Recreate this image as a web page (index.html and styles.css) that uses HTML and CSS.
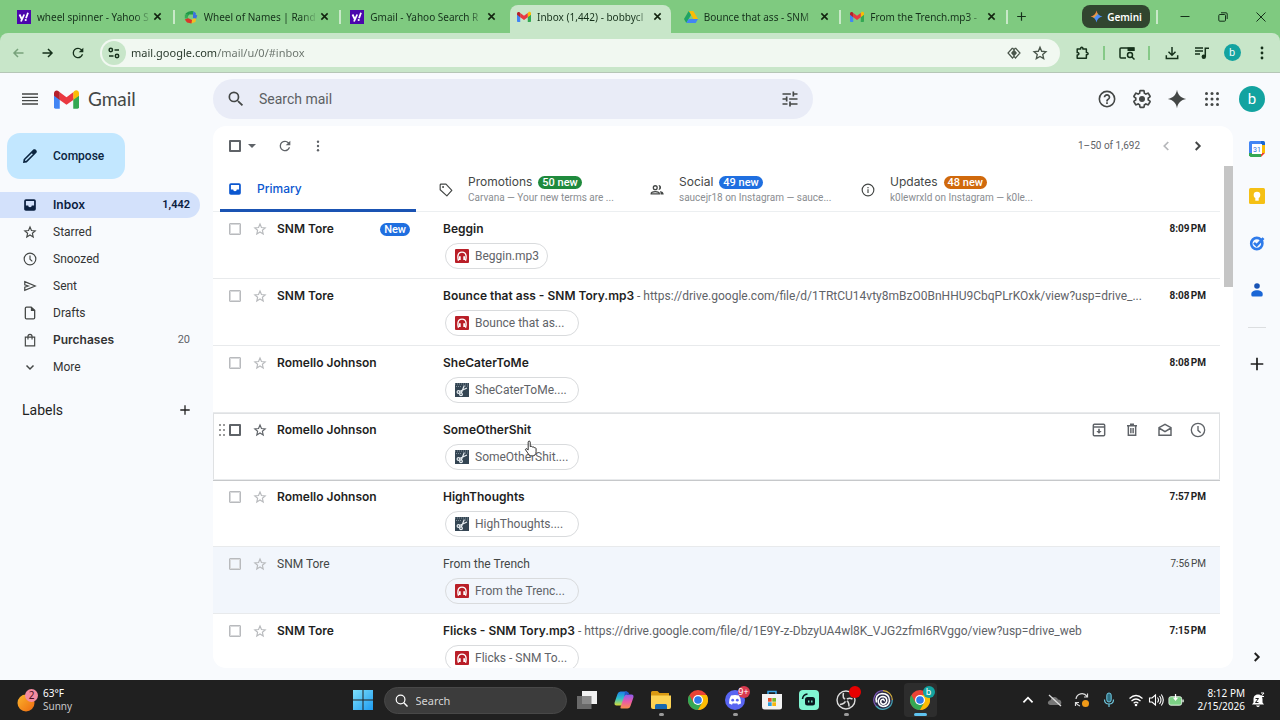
FILE: index.html
```html
<!DOCTYPE html>
<html lang="en">
<head>
<meta charset="utf-8">
<title>Inbox (1,442) - Gmail</title>
<link rel="stylesheet" href="styles.css">
</head>
<body>
<svg class="sprite" aria-hidden="true">
  <defs>
    <linearGradient id="winBlue" x1="0" y1="0" x2="1" y2="1"><stop offset="0" stop-color="#7fe0fb"/><stop offset="1" stop-color="#1d9bf0"/></linearGradient>
    <linearGradient id="sunFill" x1="0" y1="0" x2="1" y2="1"><stop offset="0" stop-color="#fbb52c"/><stop offset="1" stop-color="#ee6a10"/></linearGradient>
    <linearGradient id="copA" x1="0" y1="0" x2="0" y2="1"><stop offset="0" stop-color="#1c7ee8"/><stop offset=".5" stop-color="#2fc0c8"/><stop offset="1" stop-color="#d9dc35"/></linearGradient>
    <linearGradient id="copB" x1="0" y1="0" x2="0" y2="1"><stop offset="0" stop-color="#8a5cf0"/><stop offset=".5" stop-color="#e95aa9"/><stop offset="1" stop-color="#fb8f4a"/></linearGradient>
    <linearGradient id="gemFill" x1="0" y1="0" x2="1" y2="1"><stop offset=".25" stop-color="#ee5b45"/><stop offset=".4" stop-color="#e8a33c"/><stop offset=".5" stop-color="#4c8df6"/><stop offset=".8" stop-color="#4c8df6"/></linearGradient>
  </defs>
  <symbol id="x" viewBox="0 0 10 10"><path d="M1.500 1.500l7 7M8.500 1.500l-7 7" stroke="currentColor" stroke-width="1.700" fill="none"/></symbol>
  <symbol id="yahoo" viewBox="0 0 14 14"><rect width="14" height="14" fill="#4b06ad"/><path d="M2.500 4.500l2.200 4.500M7.200 4.500L4 11.500M9 8.200l2-5.400" stroke="#fff" stroke-width="1.800" fill="none"/><circle cx="8.700" cy="10" r="1.100" fill="#fff"/></symbol>
  <symbol id="wheel" viewBox="0 0 14 14"><path d="M1.500 3.500Q5 0 9.500 1.200L9 4.500H5L3.500 7z" fill="#1f9a48"/><path d="M9.500 1.200l2.500 2-.5 1.300 1.800 1L12 9l-3-1V4.500z" fill="#3a6fe0"/><path d="M12 8.500L11.500 12 7 13.500V10l3-1.500z" fill="#f1bd24"/><path d="M7.500 13.500L3 12.500.8 9.500l3-1.500L8 10z" fill="#d8372a"/><path d="M.8 8.500V4.500l3-.5v4.500z" fill="#37ad55"/></symbol>
  <symbol id="gmail" viewBox="0 0 26 19"><path d="M0 5v12.500Q0 19 1.600 19H6V8.500z" fill="#4285f4"/><path d="M20 8.500V19h4.400q1.600 0 1.600-1.500V5z" fill="#34a853"/><path d="M20 2v8l6-4.500V3c0-2.700-3-3.900-4.800-2.300z" fill="#fbbc04"/><path d="M6 10V2l7 5.200L20 2v8l-7 5z" fill="#ea3840"/><path d="M0 3v2.500L6 10V2L4.800.9C3-.8 0 .4 0 3z" fill="#b5202c"/></symbol>
  <symbol id="drive" viewBox="0 0 14 13"><path d="M4.700.5h4.600L14 8.500H9.500z" fill="#fbbc04"/><path d="M4.700.5L0 8.500l2.300 4L7 4.500z" fill="#1fa463"/><path d="M4.600 8.500H14l-2.300 4H2.300z" fill="#4285f4"/></symbol>
  <symbol id="spark" viewBox="0 0 24 24"><path d="M12 1c1.200 6.400 4.600 9.800 11 11-6.400 1.200-9.800 4.600-11 11-1.200-6.400-4.600-9.800-11-11 6.400-1.200 9.800-4.600 11-11z"/></symbol>
  <symbol id="plus" viewBox="0 0 14 14"><path d="M7 1.500v11M1.500 7h11" stroke="currentColor" stroke-width="1.500"/></symbol>
  <symbol id="min" viewBox="0 0 10 10"><path d="M.5 4.500h9" stroke="currentColor"/></symbol>
  <symbol id="restore" viewBox="0 0 10 10"><g fill="none" stroke="currentColor"><rect x=".8" y="2.500" width="6.700" height="6.700" rx="1"/><path d="M3 .8h5q1.200 0 1.200 1.200v5"/></g></symbol>
  <symbol id="close" viewBox="0 0 10 10"><path d="M.5.5l9 9M9.500.5l-9 9" stroke="currentColor"/></symbol>
  <symbol id="back" viewBox="0 0 14 14"><path d="M12.500 7H3M7 3L3 7l4 4" fill="none" stroke="currentColor" stroke-width="1.500"/></symbol>
  <symbol id="fwd" viewBox="0 0 14 14"><path d="M1.500 7H11M7 3l4 4-4 4" fill="none" stroke="currentColor" stroke-width="1.500"/></symbol>
  <symbol id="reload" viewBox="0 0 24 24"><path d="M17.650 6.350A7.960 7.960 0 0 0 12 4a8 8 0 1 0 7.730 10h-2.080A6 6 0 1 1 12 6c1.660 0 3.140.69 4.220 1.780L13 11h7V4z"/></symbol>
  <symbol id="siteinfo" viewBox="0 0 12 12"><g fill="none" stroke="currentColor" stroke-width="1.500"><circle cx="2.800" cy="3" r="1.700"/><path d="M6.500 3H11M1 9h4.500"/><circle cx="9" cy="9" r="1.700"/></g></symbol>
  <symbol id="lensid" viewBox="0 0 14 12"><g fill="none" stroke="currentColor" stroke-width="1.200"><path d="M5.500 1L1 6l4.500 5L7 9.300M8.500 1L13 6l-4.500 5L7 9.300M5.500 1L7 2.700 8.500 1"/></g><path d="M7 2.500L10 6 7 9.500 4 6z" fill="currentColor"/></symbol>
  <symbol id="star" viewBox="0 0 24 24"><path d="M12 3.500l2.500 5.900 6.400.6-4.800 4.200 1.400 6.300L12 17.200l-5.500 3.300 1.400-6.300L3.100 10l6.400-.6z" fill="none" stroke="currentColor" stroke-width="2"/></symbol>
  <symbol id="puzzle" viewBox="0 0 16 16"><path d="M2.500 3.500h4c-.5-2.600 3-2.600 2.500 0h4v4c2.600-.5 2.600 3 0 2.500v4H2.500v-3.800c2.600.3 2.600-3 0-2.700z" fill="none" stroke="currentColor" stroke-width="1.700" stroke-linejoin="round"/></symbol>
  <symbol id="taglens" viewBox="0 0 16 14"><g fill="none" stroke="currentColor" stroke-width="1.500"><path d="M15 5V2H2q-1 0-1 1v8q0 1 1 1h5"/><circle cx="11" cy="9" r="2.500"/><path d="M13 11l2.500 2.500"/></g><path d="M8.500 1.500H15V5H8.500z" fill="currentColor"/></symbol>
  <symbol id="download" viewBox="0 0 16 16"><path d="M8 1v9M4 6.500l4 4 4-4M1.500 10.500v3.800h13v-3.800" fill="none" stroke="currentColor" stroke-width="1.700"/></symbol>
  <symbol id="playlist" viewBox="0 0 16 14"><path d="M1 2h8M1 5h8M1 8h5M11.300 11V2.200h3.700" fill="none" stroke="currentColor" stroke-width="1.500"/><circle cx="9.800" cy="10.800" r="2.200" fill="currentColor"/></symbol>
  <symbol id="dots" viewBox="0 0 4 14"><g fill="currentColor"><circle cx="2" cy="2" r="1.400"/><circle cx="2" cy="7" r="1.400"/><circle cx="2" cy="12" r="1.400"/></g></symbol>
  <symbol id="menu" viewBox="0 0 16 12"><path d="M0 1h16M0 4.300h16M0 7.700h16M0 11h16" stroke="currentColor" stroke-width="1.300"/></symbol>
  <symbol id="search" viewBox="0 0 24 24"><path d="M15.500 14h-.79l-.28-.27A6.470 6.470 0 0 0 16 9.500 6.500 6.500 0 1 0 9.500 16c1.610 0 3.090-.59 4.230-1.570l.27.28v.79l5 4.990L20.490 19zm-6 0a4.500 4.500 0 1 1 0-9 4.500 4.500 0 0 1 0 9z"/></symbol>
  <symbol id="tune" viewBox="0 0 24 24"><path d="M3 17v2h6v-2H3zM3 5v2h10V5H3zm10 16v-2h8v-2h-8v-2h-2v6h2zM7 9v2H3v2h4v2h2V9H7zm14 4v-2H11v2h10zm-6-4h2V7h4V5h-4V3h-2v6z"/></symbol>
  <symbol id="help" viewBox="0 0 24 24"><circle cx="12" cy="12" r="9.200" fill="none" stroke="currentColor" stroke-width="1.900"/><path d="M11 18h2v-2h-2zM12 6c-2.210 0-4 1.790-4 4h2c0-1.100.9-2 2-2s2 .9 2 2c0 2-3 1.750-3 5h2c0-2.250 3-2.500 3-5 0-2.210-1.790-4-4-4z"/></symbol>
  <symbol id="gear" viewBox="0 0 24 24"><path d="M19.430 12.980c.04-.32.07-.64.07-.98s-.03-.66-.07-.98l2.110-1.650c.19-.15.24-.42.12-.64l-2-3.460c-.12-.22-.39-.3-.61-.22l-2.490 1c-.52-.4-1.080-.73-1.690-.98l-.38-2.650C14.460 2.180 14.250 2 14 2h-4c-.25 0-.46.18-.49.42l-.38 2.650c-.61.25-1.170.59-1.690.98l-2.490-1c-.23-.09-.49 0-.61.22l-2 3.460c-.13.22-.07.49.12.64l2.110 1.650c-.04.32-.07.65-.07.98s.03.66.07.98l-2.110 1.650c-.19.15-.24.42-.12.64l2 3.460c.12.22.39.3.61.22l2.490-1c.52.4 1.080.73 1.690.98l.38 2.650c.03.24.24.42.49.42h4c.25 0 .46-.18.49-.42l.38-2.650c.61-.25 1.170-.59 1.690-.98l2.490 1c.23.09.49 0 .61-.22l2-3.460c.12-.22.07-.49-.12-.64z" fill="none" stroke="currentColor" stroke-width="2"/><circle cx="12" cy="12" r="3.600"/></symbol>
  <symbol id="apps" viewBox="0 0 16 16"><g><circle cx="2.500" cy="2.500" r="1.500"/><circle cx="8" cy="2.500" r="1.500"/><circle cx="13.500" cy="2.500" r="1.500"/><circle cx="2.500" cy="8" r="1.500"/><circle cx="8" cy="8" r="1.500"/><circle cx="13.500" cy="8" r="1.500"/><circle cx="2.500" cy="13.500" r="1.500"/><circle cx="8" cy="13.500" r="1.500"/><circle cx="13.500" cy="13.500" r="1.500"/></g></symbol>
  <symbol id="pencil" viewBox="0 0 16 16"><path d="M1 15l.6-3.700L11.300 1.600c1.600-1.600 4.700 1.500 3.100 3.100L4.700 14.400z"/><path d="M3 13l.2-1.200 6.600-6.600 1 1-6.600 6.600z" fill="#c2e7ff"/></symbol>
  <symbol id="inbox" viewBox="0 0 24 24"><path d="M19 2H5a3 3 0 0 0-3 3v14c0 1.700 1.300 3 3 3h14a3 3 0 0 0 3-3V5a3 3 0 0 0-3-3zm0 11h-4c0 1.660-1.350 3-3 3s-3-1.340-3-3H5V5h14z"/></symbol>
  <symbol id="clock" viewBox="0 0 24 24"><g fill="none" stroke="currentColor" stroke-width="2"><circle cx="12" cy="12" r="10"/><path d="M12 6v6.500l4 3.500"/></g></symbol>
  <symbol id="send" viewBox="0 0 24 24"><path d="M3 4.500L21 12 3 19.500V14l6-2-6-2z" fill="none" stroke="currentColor" stroke-width="2"/></symbol>
  <symbol id="file" viewBox="0 0 24 24"><path d="M14 2H6Q4 2 4 4v16q0 2 2 2h12q2 0 2-2V7.500z" fill="none" stroke="currentColor" stroke-width="2.200"/><path d="M13.500 2v6.500H21z"/></symbol>
  <symbol id="bag" viewBox="0 0 24 24"><path d="M4 7h16v15H4zM8.500 11V6c0-5 7-5 7 0v5" fill="none" stroke="currentColor" stroke-width="2"/></symbol>
  <symbol id="down" viewBox="0 0 14 14"><path d="M3.500 5.500L7 9l3.500-3.500" fill="none" stroke="currentColor" stroke-width="1.500"/></symbol>
  <symbol id="up" viewBox="0 0 14 14"><path d="M3 9l4-4 4 4" fill="none" stroke="currentColor" stroke-width="1.500"/></symbol>
  <symbol id="left" viewBox="0 0 14 14"><path d="M9 3.500L5.500 7 9 10.500" fill="none" stroke="currentColor" stroke-width="1.500"/></symbol>
  <symbol id="right" viewBox="0 0 14 14"><path d="M5 3.500L8.500 7 5 10.500" fill="none" stroke="currentColor" stroke-width="1.700"/></symbol>
  <symbol id="tag" viewBox="0 0 24 24"><path d="M2 3.500Q2 2 3.500 2H12l10 10.500L13.500 22 2 11.500z" fill="none" stroke="currentColor" stroke-width="2" stroke-linejoin="round"/><circle cx="7" cy="7" r="1.700"/></symbol>
  <symbol id="people" viewBox="0 0 24 20"><g fill="none" stroke="currentColor" stroke-width="2.200"><circle cx="9" cy="6" r="3.300"/><path d="M2 16.500c0-5 14-5 14 0z"/></g><path d="M14.500 1.500c6 0 6 8.500 0 8.500 2-2.500 2-6 0-8.500zM17 11.500c4 .6 6.500 2.500 6.500 6H18c.2-2.500 0-4.500-1-6z"/></symbol>
  <symbol id="info" viewBox="0 0 24 24"><circle cx="12" cy="12" r="10" fill="none" stroke="currentColor" stroke-width="2"/><path d="M11 10.500h2V17h-2zM11 7h2v2h-2z"/></symbol>
  <symbol id="audio" viewBox="0 0 14 14"><rect width="14" height="14" rx="1" fill="#b91f28"/><path d="M4 11H3.300Q2.700 8.500 3 6.500a4.050 4.050 0 0 1 8 0q.3 2-.3 4.500H10" fill="none" stroke="#fff" stroke-width="1.400"/><path d="M4 7.300h1.700V11H4zM8.300 7.300H10V11H8.300z" fill="#fff"/></symbol>
  <symbol id="cut" viewBox="0 0 14 14"><rect width="14" height="14" fill="#344553"/><path d="M0 1h14M1 3.500h5M10 3h3" stroke="#81909a" stroke-width="1" stroke-dasharray="1 1"/><g fill="none" stroke="#e8eef2" stroke-width="1.200"><path d="M4.500 8.500L12 5M6.300 10l3-7.500"/><circle cx="3.500" cy="9" r="1.400"/><circle cx="6" cy="11.300" r="1.400"/></g></symbol>
  <symbol id="archive" viewBox="0 0 24 24"><g fill="none" stroke="currentColor" stroke-width="2.200"><rect x="3.500" y="3.500" width="17" height="17" rx="1.500"/><path d="M3 7.500h18"/></g><path d="M10.800 10h2.400v3.500H16l-4 4-4-4h2.800z"/></symbol>
  <symbol id="trash" viewBox="0 0 24 24"><g fill="none" stroke="currentColor" stroke-width="2.200"><path d="M6.500 6v14h11V6M4.500 5.500h15M9 3.500h6M10.300 9v8M13.700 9v8"/></g></symbol>
  <symbol id="mailopen" viewBox="0 0 24 24"><path d="M3 8.500L12 3.500l9 5V20H3zM3 9l9 5.500L21 9" fill="none" stroke="currentColor" stroke-width="2.200"/></symbol>
  <symbol id="handle" viewBox="0 0 8 12"><g fill="#9a9a9a"><rect x="1" y="0" width="2" height="2"/><rect x="5" y="0" width="2" height="2"/><rect x="1" y="5" width="2" height="2"/><rect x="5" y="5" width="2" height="2"/><rect x="1" y="10" width="2" height="2"/><rect x="5" y="10" width="2" height="2"/></g></symbol>
  <symbol id="keep" viewBox="0 0 16 16"><rect width="16" height="16" rx="1.500" fill="#f5c015"/><circle cx="8" cy="7" r="3.300" fill="#fff"/><path d="M6.300 9h3.400v3.700H6.300z" fill="#fff"/></symbol>
  <symbol id="tasks" viewBox="0 0 16 16"><circle cx="7.800" cy="8.500" r="5.600" fill="none" stroke="#2f7bea" stroke-width="2.600"/><path d="M5 7.800l2.700 2.700 6.800-7.300" fill="none" stroke="#2f7bea" stroke-width="2.600"/></symbol>
  <symbol id="contact" viewBox="0 0 16 16"><circle cx="8" cy="4" r="2.800" fill="#1853b5"/><path d="M2.300 13V12c0-5 11.400-5 11.400 0v1q0 1.500-1.500 1.500H3.800Q2.300 14.500 2.300 13z" fill="#1a66d6"/></symbol>
  <symbol id="chrome" viewBox="0 0 20 20"><circle cx="10" cy="10" r="10" fill="#ea4335"/><path d="M1.300 5A10 10 0 0 0 10 20l4.500-7.500-9 0z" fill="#34a853"/><path d="M18.700 5A10 10 0 0 1 10 20l4.300-7.500L10 5z" fill="#fbbc04"/><circle cx="10" cy="10" r="5" fill="#fff"/><circle cx="10" cy="10" r="3.800" fill="#2f79ea"/></symbol>
</svg>

<header class="browser">
  <div class="tabstrip">
    <nav class="tabs" aria-label="Browser tabs">
      <div class="tab"><svg class="fav"><use href="#yahoo"/></svg><span class="tab-title">wheel spinner - Yahoo S</span><button class="tab-x" aria-label="Close tab"><svg><use href="#x"/></svg></button></div>
      <div class="tab"><svg class="fav"><use href="#wheel"/></svg><span class="tab-title">Wheel of Names | Rand</span><button class="tab-x" aria-label="Close tab"><svg><use href="#x"/></svg></button></div>
      <div class="tab plain"><svg class="fav"><use href="#yahoo"/></svg><span class="tab-title">Gmail - Yahoo Search R</span><button class="tab-x" aria-label="Close tab"><svg><use href="#x"/></svg></button></div>
      <div class="tab active"><svg class="fav"><use href="#gmail"/></svg><span class="tab-title">Inbox (1,442) - bobbycl</span><button class="tab-x" aria-label="Close tab"><svg><use href="#x"/></svg></button></div>
      <div class="tab"><svg class="fav"><use href="#drive"/></svg><span class="tab-title">Bounce that ass - SNM</span><button class="tab-x" aria-label="Close tab"><svg><use href="#x"/></svg></button></div>
      <div class="tab"><svg class="fav"><use href="#gmail"/></svg><span class="tab-title">From the Trench.mp3 -</span><button class="tab-x" aria-label="Close tab"><svg><use href="#x"/></svg></button></div>
    </nav>
    <button class="newtab" aria-label="New tab"><svg><use href="#plus"/></svg></button>
    <button class="gemini"><svg><use href="#spark"/></svg>Gemini</button>
    <span class="strip-sep"></span>
    <div class="winctl">
      <button aria-label="Minimize"><svg><use href="#min"/></svg></button>
      <button aria-label="Restore"><svg><use href="#restore"/></svg></button>
      <button aria-label="Close"><svg><use href="#close"/></svg></button>
    </div>
  </div>
  <div class="toolbar">
    <div class="navbtns">
      <button class="dim" aria-label="Back"><svg><use href="#back"/></svg></button>
      <button aria-label="Forward"><svg><use href="#fwd"/></svg></button>
      <button aria-label="Reload"><svg class="big"><use href="#reload"/></svg></button>
    </div>
    <div class="omnibox">
      <button class="site" aria-label="Site information"><svg><use href="#siteinfo"/></svg></button>
      <input class="url" type="text" aria-label="Address" value="mail.google.com/mail/u/0/#inbox">
      <button class="omni-btn" aria-label="Autofill"><svg><use href="#lensid"/></svg></button>
      <button class="omni-btn" aria-label="Bookmark"><svg class="big"><use href="#star"/></svg></button>
    </div>
    <div class="exts">
      <button aria-label="Extensions"><svg><use href="#puzzle"/></svg></button><span class="ext-sep"></span>
      <button aria-label="Search with Lens"><svg><use href="#taglens"/></svg></button><span class="ext-sep"></span>
      <button aria-label="Downloads"><svg><use href="#download"/></svg></button>
      <button aria-label="Media"><svg><use href="#playlist"/></svg></button>
      <button aria-label="Profile"><span class="mini-avatar">b</span></button>
      <button aria-label="Menu"><svg><use href="#dots"/></svg></button>
    </div>
  </div>
</header>

<div class="app">
  <header class="gm-head">
    <div class="brand">
      <button aria-label="Main menu"><svg class="burger"><use href="#menu"/></svg></button>
      <a class="logo" href="#"><svg><use href="#gmail"/></svg><span>Gmail</span></a>
    </div>
    <form class="searchbar">
      <button type="button" aria-label="Search"><svg><use href="#search"/></svg></button>
      <input type="text" placeholder="Search mail" aria-label="Search mail">
      <button type="button" aria-label="Search options"><svg><use href="#tune"/></svg></button>
    </form>
    <div class="head-actions">
      <button aria-label="Support"><svg><use href="#help"/></svg></button>
      <button aria-label="Settings"><svg><use href="#gear"/></svg></button>
      <button aria-label="Ask Gemini"><svg><use href="#spark"/></svg></button>
      <button aria-label="Google apps"><svg class="small"><use href="#apps"/></svg></button>
      <button class="avatar" aria-label="Account">b</button>
    </div>
  </header>

  <div class="gm-body">
    <aside class="sidebar">
      <button class="compose"><svg><use href="#pencil"/></svg>Compose</button>
      <nav class="folders">
        <a class="folder current" href="#"><svg><use href="#inbox"/></svg><span>Inbox</span><b>1,442</b></a>
        <a class="folder" href="#"><svg><use href="#star"/></svg><span>Starred</span></a>
        <a class="folder" href="#"><svg><use href="#clock"/></svg><span>Snoozed</span></a>
        <a class="folder" href="#"><svg><use href="#send"/></svg><span>Sent</span></a>
        <a class="folder" href="#"><svg><use href="#file"/></svg><span>Drafts</span></a>
        <a class="folder strong" href="#"><svg><use href="#bag"/></svg><span>Purchases</span><i>20</i></a>
        <a class="folder" href="#"><svg><use href="#down"/></svg><span>More</span></a>
      </nav>
      <div class="labels"><h2>Labels</h2><button aria-label="Create new label"><svg><use href="#plus"/></svg></button></div>
    </aside>

    <main class="panel">
      <div class="listbar">
        <input class="check dark" type="checkbox" aria-label="Select all">
        <button class="caret" aria-label="Select menu"></button>
        <button class="bar-btn" aria-label="Refresh"><svg><use href="#reload"/></svg></button>
        <button class="bar-btn" aria-label="More options"><svg class="tiny"><use href="#dots"/></svg></button>
        <span class="count">1–50 of 1,692</span>
        <button class="page-btn faded" aria-label="Newer"><svg><use href="#left"/></svg></button>
        <button class="page-btn" aria-label="Older"><svg><use href="#right"/></svg></button>
      </div>
      <div class="scroll">
        <div class="content">
          <nav class="cats">
            <a class="cat on" href="#"><svg><use href="#inbox"/></svg><span class="cat-name">Primary</span></a>
            <a class="cat" href="#"><svg><use href="#tag"/></svg><span class="cat-text"><span class="cat-name">Promotions <em class="pill green">50 new</em></span><small>Carvana — Your new terms are ...</small></span></a>
            <a class="cat" href="#"><svg><use href="#people"/></svg><span class="cat-text"><span class="cat-name">Social <em class="pill blue">49 new</em></span><small>saucejr18 on Instagram — sauce...</small></span></a>
            <a class="cat" href="#"><svg><use href="#info"/></svg><span class="cat-text"><span class="cat-name">Updates <em class="pill orange">48 new</em></span><small>k0lewrxld on Instagram — k0le...</small></span></a>
          </nav>
          <ul class="mails">
            <li class="mail"><span class="grip"></span><input class="check" type="checkbox" aria-label="Select Beggin"><button class="fave" aria-label="Star"><svg><use href="#star"/></svg></button><span class="from">SNM Tore<em class="pill blue">New</em></span><div class="what"><p><b>Beggin</b></p><a class="chip short" href="#"><svg><use href="#audio"/></svg>Beggin.mp3</a></div><time>8:09&#8239;PM</time></li>
            <li class="mail"><span class="grip"></span><input class="check" type="checkbox" aria-label="Select Bounce"><button class="fave" aria-label="Star"><svg><use href="#star"/></svg></button><span class="from">SNM Tore</span><div class="what"><p><b>Bounce that ass - SNM Tory.mp3</b> - https://drive.google.com/file/d/1TRtCU14vty8mBzO0BnHHU9CbqPLrKOxk/view?usp=drive_...</p><a class="chip" href="#"><svg><use href="#audio"/></svg>Bounce that as...</a></div><time>8:08&#8239;PM</time></li>
            <li class="mail"><span class="grip"></span><input class="check" type="checkbox" aria-label="Select SheCaterToMe"><button class="fave" aria-label="Star"><svg><use href="#star"/></svg></button><span class="from">Romello Johnson</span><div class="what"><p><b>SheCaterToMe</b></p><a class="chip" href="#"><svg><use href="#cut"/></svg>SheCaterToMe....</a></div><time>8:08&#8239;PM</time></li>
            <li class="mail hover"><span class="grip"><svg><use href="#handle"/></svg></span><input class="check dark" type="checkbox" aria-label="Select SomeOtherShit"><button class="fave" aria-label="Star"><svg><use href="#star"/></svg></button><span class="from">Romello Johnson</span><div class="what"><p><b>SomeOtherShit</b></p><a class="chip" href="#"><svg><use href="#cut"/></svg>SomeOtherShit....</a>
              <svg class="pointer" viewBox="0 0 14 18"><path d="M4.500 10.500V2.200c0-1.600 2.200-1.600 2.200 0V7c1-.7 2-.4 2.200.5 1-.5 1.900-.2 2.100.7 1-.4 2 .1 2 1.300v3c0 3-1.500 4.500-4.300 4.500-2.700 0-3.700-1.300-4.700-3.300L1.700 10.500c-.5-1.300 1-1.800 1.700-.8z" fill="#fff" stroke="#222"/></svg></div>
              <div class="acts"><button aria-label="Archive"><svg><use href="#archive"/></svg></button><button aria-label="Delete"><svg><use href="#trash"/></svg></button><button aria-label="Mark as read"><svg><use href="#mailopen"/></svg></button><button aria-label="Snooze"><svg><use href="#clock"/></svg></button></div></li>
            <li class="mail"><span class="grip"></span><input class="check" type="checkbox" aria-label="Select HighThoughts"><button class="fave" aria-label="Star"><svg><use href="#star"/></svg></button><span class="from">Romello Johnson</span><div class="what"><p><b>HighThoughts</b></p><a class="chip" href="#"><svg><use href="#cut"/></svg>HighThoughts....</a></div><time>7:57&#8239;PM</time></li>
            <li class="mail read"><span class="grip"></span><input class="check" type="checkbox" aria-label="Select From the Trench"><button class="fave" aria-label="Star"><svg><use href="#star"/></svg></button><span class="from">SNM Tore</span><div class="what"><p><b>From the Trench</b></p><a class="chip" href="#"><svg><use href="#audio"/></svg>From the Trenc...</a></div><time>7:56&#8239;PM</time></li>
            <li class="mail"><span class="grip"></span><input class="check" type="checkbox" aria-label="Select Flicks"><button class="fave" aria-label="Star"><svg><use href="#star"/></svg></button><span class="from">SNM Tore</span><div class="what"><p><b>Flicks - SNM Tory.mp3</b> - https://drive.google.com/file/d/1E9Y-z-DbzyUA4wl8K_VJG2zfmI6RVggo/view?usp=drive_web</p><a class="chip" href="#"><svg><use href="#audio"/></svg>Flicks - SNM To...</a></div><time>7:15&#8239;PM</time></li>
          </ul>
        </div>
        <div class="track"><div class="thumb"></div></div>
      </div>
    </main>

    <aside class="rail">
      <button aria-label="Calendar"><svg viewBox="0 0 16 16"><path d="M0 1.500Q0 0 1.500 0H12v4H4v8H0z" fill="#4285f4"/><path d="M12 0h2.500Q16 0 16 1.500V4h-4z" fill="#1967d2"/><path d="M12 4h4v8h-4z" fill="#fbbc04"/><path d="M4 12h8v4H1.500L0 14.500V12z" fill="#34a853"/><path d="M12 12h4l-4 4z" fill="#ea4335"/><path d="M3 3h10v10H3z" fill="#fff"/><text x="8" y="10.500" font-size="7" text-anchor="middle" fill="#2f6fdc">31</text></svg></button>
      <button aria-label="Keep"><svg><use href="#keep"/></svg></button>
      <button aria-label="Tasks"><svg><use href="#tasks"/></svg></button>
      <button aria-label="Contacts"><svg><use href="#contact"/></svg></button>
      <hr>
      <button class="add" aria-label="Get add-ons"><svg><use href="#plus"/></svg></button>
      <button class="collapse" aria-label="Hide side panel"><svg><use href="#right"/></svg></button>
    </aside>
  </div>
</div>

<footer class="taskbar">
  <button class="weather"><svg viewBox="0 0 22 24"><circle cx="9" cy="15" r="8.500" fill="url(#sunFill)"/><circle cx="14.500" cy="7.500" r="6.500" fill="#f58ba0"/><text x="14.500" y="11" font-size="10" text-anchor="middle" fill="#4a1020">2</text></svg><span>63°F<br><i>Sunny</i></span></button>
  <div class="dock">
    <button class="app-btn start" aria-label="Start"><svg viewBox="0 0 20 20"><path d="M0 0h9.500v9.500H0zM10.500 0H20v9.500h-9.500zM0 10.500h9.500V20H0zM10.500 10.500H20V20h-9.500z"/></svg></button>
    <label class="tb-search"><svg viewBox="0 0 14 14"><circle cx="6" cy="6" r="4.700" fill="none" stroke="#fff" stroke-width="1.300"/><path d="M9.500 9.500l4 4" stroke="#fff" stroke-width="1.500"/></svg><input type="text" placeholder="Search" aria-label="Search Windows"></label>
    <button class="app-btn" aria-label="Task view"><svg viewBox="0 0 20 20"><rect x="5" y="1" width="15" height="13" fill="#f1f1f1"/><rect x="0" y="6" width="14.500" height="13" fill="#777" opacity=".85"/></svg></button>
    <button class="app-btn" aria-label="Copilot"><svg viewBox="0 0 20 20"><path d="M6.500 1.500h6q1.500 0 1 1.500L10 13q-.7 2.500-3 2.500H2.500Q0 15.500.6 12.500L3.500 4q.8-2.500 3-2.500z" fill="url(#copA)"/><path d="M13 4.500h4.500q2.500 0 1.900 3l-2.900 8.500q-.8 2.500-3 2.500h-6q-1.500 0-1-1.500L10 7q.7-2.500 3-2.500z" fill="url(#copB)"/><path d="M11 1.500h1.500q2 0 3 3H13q-2 0-2.700 2z" fill="#2457c9"/></svg></button>
    <button class="app-btn open" aria-label="File Explorer"><svg viewBox="0 0 20 20"><path d="M0 2.500Q0 1 1.500 1h5l2 2H18v4H0z" fill="#d99a13"/><path d="M0 5.500h20V17q0 2-2 2H2q-2 0-2-2z" fill="#fcd354"/><path d="M4 19v-3.500Q4 14 5.500 14h9q1.500 0 1.500 1.500V19z" fill="#1769b0"/></svg></button>
    <button class="app-btn" aria-label="Chrome"><svg><use href="#chrome"/></svg></button>
    <button class="app-btn open" aria-label="Discord"><svg viewBox="0 0 20 20"><circle cx="10" cy="10" r="10" fill="#5865f2"/><path d="M6 5.500q4-1 8 0 2.300 3.500 2 8l-3 1.300-.8-1.500q-2.200.5-4.400 0L7 14.800l-3-1.300q-.3-4.500 2-8z" fill="#fff"/><circle cx="7.700" cy="10.200" r="1.400" fill="#5865f2"/><circle cx="12.300" cy="10.200" r="1.400" fill="#5865f2"/></svg><span class="badge red">9+</span></button>
    <button class="app-btn" aria-label="Store"><svg viewBox="0 0 20 20"><path d="M6 4V1.500h8V4" fill="none" stroke="#39a7e8" stroke-width="1.500"/><path d="M0 4h20v13q0 2.500-2.500 2.500h-15Q0 19.500 0 17z" fill="#f3f3f3"/><path d="M6 8h3.700v3.700H6z" fill="#e8502a"/><path d="M10.300 8H14v3.700h-3.700z" fill="#76b82a"/><path d="M6 12.300h3.700V16H6z" fill="#2a9fe0"/><path d="M10.300 12.300H14V16h-3.700z" fill="#f8b711"/></svg></button>
    <button class="app-btn" aria-label="Streamlabs"><svg viewBox="0 0 20 20"><rect width="20" height="20" rx="4" fill="#80f5d2"/><rect x="6" y="7" width="10" height="8.500" rx="2.500" fill="#09161d"/><path d="M3.500 9q.5-4.500 5-5" fill="none" stroke="#09161d" stroke-width="1.600"/><path d="M9.700 10.500v2M12.800 10.500v2" stroke="#80f5d2" stroke-width="1.300"/></svg></button>
    <button class="app-btn open" aria-label="OBS Studio"><svg viewBox="0 0 20 20"><circle cx="10" cy="10" r="9" fill="#262626" stroke="#ddd" stroke-width="1.400"/><g fill="none" stroke="#ddd" stroke-width="1.500"><path d="M7.500 3q-1.500 5 2.500 7 2.500-3 6.500-1M10 10q-1 4-6 4.500M10 10q3 1.500 3 6.500"/></g><circle cx="10" cy="10" r="1.600" fill="#262626"/></svg><span class="badge rec"></span></button>
    <button class="app-btn" aria-label="Connect"><svg viewBox="0 0 20 20"><circle cx="10" cy="10" r="9.300" fill="#2a2a45"/><path d="M10 .7A9.300 9.300 0 0 1 19.300 10" fill="none" stroke="#d8b23b" stroke-width="1.200"/><path d="M19.300 10A9.300 9.300 0 0 1 3 16" fill="none" stroke="#45a6b8" stroke-width="1.200"/><path d="M3 16A9.300 9.300 0 0 1 10 .7" fill="none" stroke="#7c56b8" stroke-width="1.200"/><path d="M3.500 12.500Q1.500 4.500 9 3.500q7.500 0 7.500 7.500-1 5.500-6.500 5.500-5-1-4.800-6Q6.500 6.500 10 6.500q4 .5 3.800 4.500-.8 3.500-4 3.200-2.600-1-2-3.500Q8.700 9 10.500 9.300q1.200 1 .5 2" fill="none" stroke="#fff" stroke-width="1.500"/></svg></button>
    <button class="app-btn focus" aria-label="Chrome, active"><svg><use href="#chrome"/></svg><span class="badge teal">b</span></button>
  </div>
  <div class="tray">
    <button aria-label="Hidden icons"><svg><use href="#up"/></svg></button>
    <button aria-label="OneDrive"><svg viewBox="0 0 16 16"><path d="M3.500 13C0 13 0 8.500 3.500 8.200 4.500 4 10 4 11 7.500c4 0 4.500 5.500 1 5.500z" fill="#777"/><path d="M2 3l12 11" stroke="#ddd" stroke-width="1.300"/></svg></button>
    <button aria-label="Updates"><svg viewBox="0 0 16 16"><path d="M2 7a6 6 0 0 1 11-2.500M13.500 1.500v3.500H10M6 14Q3 13 2 10.500M1.500 14v-3.500H5" fill="none" stroke="#ddd" stroke-width="1.200"/><circle cx="11.500" cy="11.500" r="3.500" fill="#f09a18"/></svg></button>
    <button aria-label="Microphone"><svg viewBox="0 0 16 16"><rect x="5.800" y="1" width="4.400" height="9" rx="2.200" fill="#2d6f82" stroke="#6fc7de"/><path d="M3.500 7.500c0 6 9 6 9 0M8 12v3" fill="none" stroke="#6fc7de" stroke-width="1.200"/></svg></button>
    <button class="status" aria-label="Network, volume, battery">
      <svg viewBox="0 0 16 16"><g fill="none" stroke="#fff" stroke-width="1.200"><path d="M1.500 6.500q6.500-6 13 0M3.500 9q4.500-4 9 0M5.700 11.200q2.300-2 4.600 0"/></g><circle cx="8" cy="13" r="1.300" fill="#fff"/></svg>
      <svg viewBox="0 0 16 16"><path d="M1.500 6h2.500l3.500-3v10L4 10H1.500zM9.500 5.500q2 2.500 0 5M11.500 4q3 4 0 8M13.300 2.500q4 5.500 0 11" fill="none" stroke="#fff" stroke-width="1.100"/></svg>
      <svg viewBox="0 0 17 15"><rect x="1" y="4" width="13.500" height="9" rx="2" fill="#7bd084" stroke="#e5f5e6"/><path d="M16 7v3" stroke="#e5f5e6" stroke-width="1.500"/><path d="M8 1v6M6 5l2 2.500L10 5" fill="none" stroke="#fff" stroke-width="1.300"/></svg>
    </button>
    <button class="datetime"><time>8:12 PM<br>2/15/2026</time></button>
    <button class="bell" aria-label="Notifications"><svg viewBox="0 0 14 16"><path d="M7 2.500c3.500 0 4.500 2.500 4.500 5v3l1.500 2H1l1.500-2v-3c0-2.500 1-5 4.500-5zM5 13.500h4q-2 3-4 0z" fill="#fff"/><path d="M4.500 6.500h3l-3 4h3" fill="none" stroke="#222" stroke-width="1"/><path d="M10 1h3l-3 3.500h3" fill="none" stroke="#fff"/></svg></button>
  </div>
</footer>
</body>
</html>
```

FILE: styles.css
```css
* { box-sizing: border-box; }
body {
  margin: 0;
  height: 100vh;
  display: flex;
  flex-direction: column;
  overflow: hidden;
  font: 12px/18px Roboto, "Liberation Sans", sans-serif;
  color: #1f1f1f;
  background: #f8fafd;
}
.sprite { position: absolute; width: 0; height: 0; }
svg { display: block; flex: none; fill: currentColor; width: 16px; height: 16px; }
button { border: 0; padding: 0; background: none; color: inherit; font: inherit; display: flex; align-items: center; justify-content: center; flex: none; }
input { font: inherit; color: inherit; border: 0; background: none; padding: 0; outline: 0; min-width: 0; }
a { color: inherit; text-decoration: none; }
i, em { font-style: normal; }

/* Browser frame */
.browser { background: #7fca80; font-family: "Noto Sans", "Open Sans", sans-serif; font-size: 11px; color: #15301a; }
.tabstrip { display: flex; align-items: center; height: 33px; padding-left: 10px; }
.tabs { display: flex; flex: 0 1 1000px; min-width: 0; align-self: stretch; }
.tab { flex: 1 1 0; min-width: 0; display: flex; align-items: center; margin-top: 5px; padding: 0 2px 5px 7px; position: relative; }
.tab::after { content: ""; width: 2px; height: 14px; margin-left: 7px; background: #c8e9c8; }
.fav { width: 14px; height: 14px; margin-right: 6px; }
.tab-title { flex: 1; min-width: 0; overflow: hidden; white-space: nowrap; font-size: 10px; -webkit-mask-image: linear-gradient(90deg, #000 85%, transparent); mask-image: linear-gradient(90deg, #000 85%, transparent); }
.tab-x { width: 10px; height: 16px; margin: 0 3px 0 1px; color: #12240f; }
.tab-x svg { width: 9px; height: 9px; }
.plain::after, .active::after { background: transparent; }
.active::before { content: ""; position: absolute; left: 0; right: 6px; top: 0; bottom: 0; background: #c8e6c9; border-radius: 8px 8px 0 0; }
.active > * { position: relative; }
.newtab { width: 22px; height: 28px; }
.newtab svg { width: 11px; height: 11px; }
.gemini { margin-left: auto; width: 68px; height: 23px; border-radius: 8px; background: #31452f; color: #fff; font-weight: 600; font-size: 10px; gap: 4px; }
.gemini svg { width: 13px; height: 13px; fill: url(#gemFill); }
.strip-sep { width: 2px; height: 14px; background: #c8e9c8; margin: 0 8px 0 6px; }
.winctl { display: flex; }
.winctl button { width: 38px; height: 28px; }
.winctl svg { width: 10px; height: 10px; }
.toolbar { display: flex; align-items: center; height: 40px; padding: 0 3px; background: #c8e6c9; border-bottom: 1px solid #b5c6b6; border-radius: 8px 8px 0 0; }
.navbtns { display: flex; width: 97px; }
.navbtns button { width: 30px; height: 30px; }
.navbtns svg { width: 14px; height: 14px; }
.navbtns .big { width: 16px; height: 16px; }
.dim { color: #78a27b; }
.omnibox { flex: 1; display: flex; align-items: center; height: 28px; padding: 0 7px 0 2px; border-radius: 14px; background: #f1f8f1; }
.site { width: 24px; height: 24px; border-radius: 50%; background: #c8e6c9; }
.site svg { width: 12px; height: 12px; }
.url { flex: 1; margin-left: 5px; color: transparent; background: linear-gradient(90deg, #233326 86px, #667068 86px); -webkit-background-clip: text; background-clip: text; }
.omni-btn { width: 26px; height: 26px; color: #4a564b; }
.omni-btn svg { width: 14px; height: 12px; }
.omni-btn .big { width: 16px; height: 16px; }
.exts { display: flex; align-items: center; width: 217px; padding-left: 7px; }
.exts button { width: 30px; height: 30px; }
.exts svg { width: 16px; height: 14px; }
.ext-sep { width: 2px; height: 14px; margin: 0 7px 0 6px; background: #85c987; }
.mini-avatar { width: 17px; height: 17px; border-radius: 50%; background: #13a3a0; color: #fff; font-size: 10px; line-height: 17px; }

/* Gmail header */
.app { flex: 1; min-height: 0; display: flex; flex-direction: column; padding-bottom: 12px; }
.gm-head { display: flex; align-items: center; height: 53px; padding-bottom: 1px; color: #444746; }
.brand { width: 213px; display: flex; align-items: center; padding-left: 22px; gap: 16px; }
.burger { width: 16px; height: 12px; }
.logo { display: flex; align-items: center; gap: 9px; font: 19px/24px Lato, sans-serif; }
.logo svg { width: 25px; height: 19px; }
.searchbar { flex: 0 1 600px; display: flex; align-items: center; height: 40px; padding: 0 13px; border-radius: 20px; background: #e9ecf7; gap: 13px; }
.searchbar svg { width: 20px; height: 20px; }
.searchbar input { flex: 1; font-size: 14px; }
.searchbar input::placeholder { color: #5c5f63; opacity: 1; }
.head-actions { display: flex; align-items: center; margin-left: auto; padding-right: 15px; gap: 15px; }
.head-actions svg { width: 20px; height: 20px; }
.head-actions .small { width: 16px; height: 16px; margin: 0 2px; }
.avatar { width: 26px; height: 26px; margin-left: 2px; border-radius: 50%; background: #13a3a0; color: #fff; font-size: 15px; }

/* Sidebar */
.gm-body { flex: 1; min-height: 0; display: flex; }
.sidebar { width: 213px; flex: none; }
.compose { margin: 7px 0 13px 7px; width: 118px; height: 46px; padding-left: 15px; justify-content: flex-start; border-radius: 13px; background: #c2e7ff; color: #0b2540; font-weight: 500; gap: 15px; }
.folder { display: flex; align-items: center; gap: 16px; height: 26px; margin: 0 13px 1px 0; padding: 0 10px 0 23px; color: #333; }
.folder svg { width: 14px; height: 14px; color: #444746; }
.folder span { flex: 1; }
.folder b, .folder i { font: 600 11px/18px Roboto, sans-serif; }
.folder i { font-weight: 400; color: #5f6368; }
.current { background: #d3e1fb; border-radius: 0 13px 13px 0; color: #0b2040; }
.current svg { color: #0b2040; }
.current, .strong { font-family: Inter, sans-serif; font-weight: 600; }
.labels { display: flex; align-items: center; justify-content: space-between; margin-top: 18px; padding: 0 22px; height: 24px; }
.labels h2 { margin: 0; font-size: 14px; font-weight: 400; }
.labels svg { width: 12px; height: 12px; }

/* Message list */
.panel { flex: 1; min-width: 0; display: flex; flex-direction: column; background: #fff; border-radius: 13px; overflow: hidden; }
.listbar { display: flex; align-items: center; height: 40px; flex: none; padding: 0 20px 0 16px; color: #5f6368; }
.check { appearance: none; flex: none; width: 12px; height: 12px; margin: 0; border: 1px solid #b8babd; border-radius: 1px; outline: 1px solid #d9dadc; outline-offset: -2px; }
.dark { border: 2px solid #5f6368; outline: 0; }
.caret { width: 0; height: 0; margin: 0 12px 0 7px; border: 4px solid transparent; border-top-color: #5f6368; border-bottom: 0; }
.bar-btn { width: 33px; height: 30px; }
.bar-btn .tiny { width: 4px; height: 12px; }
.count { margin-left: auto; margin-right: 9px; font-size: 10px; }
.page-btn { width: 30px; height: 30px; margin-left: 2px; color: #444746; }
.faded { color: #b5b7ba; }
.scroll { flex: 1; min-height: 0; display: flex; }
.content { flex: 1; min-width: 0; }
.track { width: 13px; flex: none; padding-left: 4px; }
.thumb { height: 121px; background: #c5c5c5; }
.cats { display: flex; gap: 15px; padding-left: 7px; height: 46px; color: #444746; }
.cat { flex: 0 1 196px; min-width: 0; display: flex; align-items: center; gap: 15px; padding: 2px 0 0 8px; }
.cat svg { width: 14px; height: 14px; }
.cat-name { display: flex; align-items: center; gap: 6px; line-height: 16px; font-family: Inter, sans-serif; }
.cat-text { min-width: 0; white-space: nowrap; }
.cat small { display: block; font-size: 10px; line-height: 16px; color: #8a8d91; }
.on { color: #0b57d0; font-weight: 500; border-bottom: 3px solid #1a53b3; }
.pill { border-radius: 7px; padding: 0 4px; font: 500 11px/13px Roboto, sans-serif; color: #fff; }
.green { background: #1f8a3d; }
.blue { background: #1f6fe0; }
.orange { background: #d0690c; }
.mails { list-style: none; margin: 0; padding: 0; box-shadow: 0 -1px #eceff1; }
.mail { display: grid; grid-template-columns: 16px 24px 24px 166px minmax(0, 1fr) auto; align-items: start; padding: 8px 14px 7px 0; border-bottom: 1px solid #e8eaec; position: relative; min-height: 67px; }
.mail > .check { margin-top: 3px; }
.grip { padding: 3px 0 0 5px; }
.grip svg { width: 8px; height: 12px; }
.fave { margin-top: 2px; width: 14px; height: 14px; color: #b8babd; }
.fave svg { width: 14px; height: 14px; }
.from { display: flex; align-items: center; justify-content: space-between; padding-right: 33px; font-family: Inter, sans-serif; font-weight: 600; }
.what { position: relative; }
.what p { margin: 0; overflow: hidden; white-space: nowrap; text-overflow: ellipsis; color: #5f6368; }
.what b { font-family: Inter, sans-serif; font-weight: 600; color: #1f1f1f; }
.chip { display: flex; align-items: center; gap: 6px; width: 134px; height: 26px; margin: 5px 0 0 2px; padding: 0 9px; border: 1px solid #d9dbdd; border-radius: 13px; color: #5f6368; white-space: nowrap; }
.chip svg { width: 14px; height: 14px; }
.short { width: 103px; }
.mail time { min-width: 50px; text-align: right; font-size: 10px; font-weight: 700; }
.read { background: #f2f6fc; }
.read .from, .read .what b, .read time { font-family: Roboto, sans-serif; font-weight: 400; color: #444746; }
.hover { box-shadow: inset 1px 0 #dfe1e3, inset -1px 0 #dfe1e3, inset 0 1px #dfe1e3, 0 1px #c6c8ca; }
.hover .fave { color: #5f6368; }
.acts { display: flex; gap: 17px; color: #5f6368; padding-top: 1px; }
.acts svg { width: 16px; height: 16px; }
.pointer { position: absolute; left: 81px; top: 19px; width: 13px; height: 17px; }

/* Side rail */
.rail { width: 47px; flex: none; display: flex; flex-direction: column; align-items: center; padding-top: 15px; }
.rail button { width: 16px; height: 16px; margin-bottom: 31px; }
.rail hr { width: 18px; margin: -2px 0 28px; border: 0; border-top: 1px solid #dcdee0; }
.rail .collapse { margin: auto 0 3px; }

/* Taskbar */
.taskbar { display: grid; grid-template-columns: 1fr auto 1fr; align-items: center; height: 40px; padding: 0 14px 0 17px; background: #202020; color: #fff; font: 10px/13px "Noto Sans", sans-serif; }
.weather { justify-self: start; gap: 4px; text-align: left; }
.weather svg { width: 22px; height: 24px; }
.weather i { color: #c8c8c8; }
.dock { display: flex; align-items: center; gap: 4px; }
.app-btn { width: 33px; height: 34px; position: relative; border-radius: 4px; }
.app-btn svg { width: 20px; height: 20px; }
.start svg { fill: url(#winBlue); }
.tb-search { display: flex; align-items: center; gap: 8px; width: 183px; height: 27px; padding: 0 10px; border-radius: 14px; background: #3c3c3c; border: 1px solid #484848; }
.tb-search svg { width: 13px; height: 13px; }
.tb-search input { flex: 1; font-size: 11px; }
.tb-search input::placeholder { color: #d5d5d5; opacity: 1; }
.open::after, .focus::after { content: ""; position: absolute; bottom: 1px; left: 14px; width: 5px; height: 3px; border-radius: 2px; background: #9a9a9a; }
.focus { background: #2d2d2d; }
.focus::after { left: 10px; width: 13px; background: #5fc3f0; }
.badge { position: absolute; top: 3px; right: 2px; width: 12px; height: 12px; border-radius: 50%; color: #fff; font-size: 9px; line-height: 12px; text-align: center; }
.red { background: #d93a50; }
.rec { background: #e80000; }
.teal { background: #13a3a0; }
.tray { display: flex; align-items: center; justify-content: flex-end; gap: 11px; }
.status { gap: 4px; margin-right: 3px; }
.tray svg { width: 16px; height: 16px; }
.datetime { text-align: right; }
.bell { margin-left: -6px; }
```
